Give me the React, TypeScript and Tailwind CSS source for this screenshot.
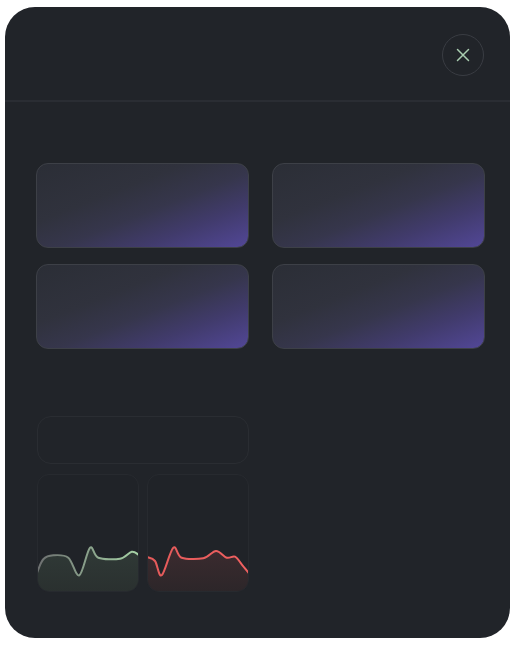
import React from "react";

type P = [number, number];

function smoothPath(pts: P[]): string {
  let d = `M ${pts[0][0]} ${pts[0][1]}`;
  for (let i = 0; i < pts.length - 1; i++) {
    const p0 = pts[i - 1] || pts[i];
    const p1 = pts[i];
    const p2 = pts[i + 1];
    const p3 = pts[i + 2] || p2;
    const t = 6;
    const c1x = p1[0] + (p2[0] - p0[0]) / t;
    const c1y = p1[1] + (p2[1] - p0[1]) / t;
    const c2x = p2[0] - (p3[0] - p1[0]) / t;
    const c2y = p2[1] - (p3[1] - p1[1]) / t;
    d += ` C ${c1x.toFixed(2)} ${c1y.toFixed(2)}, ${c2x.toFixed(2)} ${c2y.toFixed(2)}, ${p2[0]} ${p2[1]}`;
  }
  return d;
}

const greenPts: P[] = [
  [0, 98.7],
  [6.3, 85.3],
  [16.3, 81.3],
  [31.3, 83.7],
  [42.3, 101.3],
  [53, 73.7],
  [61.3, 83.7],
  [83, 84.7],
  [94.7, 77.7],
  [102, 81],
];

const redPts: P[] = [
  [0, 83],
  [8, 87],
  [14.7, 101.3],
  [26.3, 73.7],
  [34.7, 83.7],
  [56.3, 84.3],
  [69, 77],
  [79.7, 83.7],
  [88, 82.7],
  [94.7, 90.3],
  [102, 99.3],
];

function Chart({ pts, id, lineFrom, lineTo, fillTop, fillBottom }: { pts: P[]; id: string; lineFrom: string; lineTo: string; fillTop: string; fillBottom: string }) {
  const line = smoothPath(pts);
  const area = `${line} L 102 118 L 0 118 Z`;
  return (
    <div className="w-[102px] h-[118px] rounded-[12px] border border-[#272a2f] bg-[#202328] overflow-hidden">
      <svg width="102" height="118" viewBox="0 0 102 118" className="block -m-px">
        <defs>
          <linearGradient id={`${id}-l`} x1="0" y1="0" x2="1" y2="0">
            <stop offset="0" stopColor={lineFrom} />
            <stop offset="1" stopColor={lineTo} />
          </linearGradient>
          <linearGradient id={`${id}-f`} x1="0" y1="0" x2="0" y2="1">
            <stop offset="0" stopColor={fillTop} />
            <stop offset="1" stopColor={fillBottom} />
          </linearGradient>
        </defs>
        <path d={area} fill={`url(#${id}-f)`} />
        <path d={line} fill="none" stroke={`url(#${id}-l)`} strokeWidth="2" strokeLinecap="round" />
      </svg>
    </div>
  );
}

function Card() {
  return (
    <div className="h-[85px] rounded-[12px] border border-[#3d4047] bg-[linear-gradient(to_bottom_right,#2b2e36_0%,#30323d_35%,#36364c_55%,#413b6c_75%,#524797_100%)]" />
  );
}

export default function App() {
  return (
    <div className="w-[515px] h-[645px] bg-white pt-[7px] pl-[5px]" style={{ fontFamily: '"Liberation Sans", sans-serif' }}>
      <div className="w-[505px] h-[631px] rounded-[30px] bg-[#212429] overflow-hidden flex flex-col">
        <div className="h-[93px] flex justify-end items-start pt-[27px] pr-[26px] shrink-0">
          <button className="w-[42px] h-[42px] rounded-full border border-[#3a3d43] flex items-center justify-center">
            <svg width="14" height="14" viewBox="0 0 14 14">
              <path d="M1.5 1.5 L12.5 12.5 M12.5 1.5 L1.5 12.5" stroke="#a9cdb0" strokeWidth="1.5" strokeLinecap="round" />
            </svg>
          </button>
        </div>
        <div className="h-[2px] bg-[#2a2d33] shrink-0" />
        <div className="pt-[61px] pl-[31px] pr-[25px]">
          <div className="grid grid-cols-2 gap-x-[23px] gap-y-[16px]">
            <Card />
            <Card />
            <Card />
            <Card />
          </div>
          <div className="mt-[67px] ml-px w-[212px] flex flex-col gap-[10px]">
            <div className="h-[48px] rounded-[14px] border border-[#2a2d32]" />
            <div className="flex gap-[8px]">
              <Chart pts={greenPts} id="g" lineFrom="#6d6f70" lineTo="#a6d3a6" fillTop="#303a37" fillBottom="#2a302f" />
              <Chart pts={redPts} id="r" lineFrom="#e45a5a" lineTo="#ef6060" fillTop="#3c2b2f" fillBottom="#2c2629" />
            </div>
          </div>
        </div>
      </div>
    </div>
  );
}
